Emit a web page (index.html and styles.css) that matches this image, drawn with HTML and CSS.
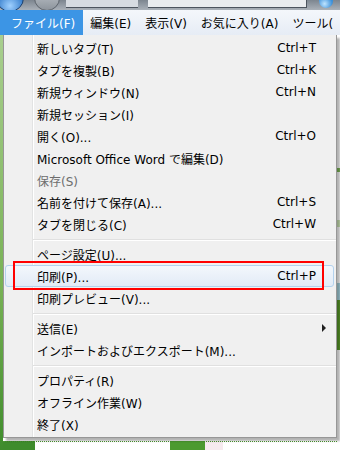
FILE: index.html
```html
<!DOCTYPE html>
<html lang="ja">
<head>
    <meta charset="UTF-8">
    <meta name="viewport" content="width=device-width, initial-scale=1.0">
    <title>ファイル メニュー</title>
    <link rel="stylesheet" href="styles.css">
</head>
<body>

    <div class="chrome">
        <span class="btn-back"></span>
        <span class="btn-fwd"></span>
        <span class="bar"></span>
        <span class="addr"></span>
        <span class="ie-icon"></span>
    </div>

    <div class="menubar">
        <span class="top-item active">ファイル(F)</span>
        <span class="top-item">編集(E)</span>
        <span class="top-item">表示(V)</span>
        <span class="top-item">お気に入り(A)</span>
        <span class="top-item">ツール(</span>
    </div>

    <div class="page">
        <div class="side-left"></div>
        <div class="menu-wrap">
            <div class="menu">
                <div class="item"><span>新しいタブ(T)</span><span class="key">Ctrl+T</span></div>
                <div class="item"><span>タブを複製(B)</span><span class="key">Ctrl+K</span></div>
                <div class="item"><span>新規ウィンドウ(N)</span><span class="key">Ctrl+N</span></div>
                <div class="item"><span>新規セッション(I)</span></div>
                <div class="item"><span>開く(O)...</span><span class="key">Ctrl+O</span></div>
                <div class="item"><span>Microsoft Office Word で編集(D)</span></div>
                <div class="item disabled"><span>保存(S)</span></div>
                <div class="item"><span>名前を付けて保存(A)...</span><span class="key">Ctrl+S</span></div>
                <div class="item"><span>タブを閉じる(C)</span><span class="key">Ctrl+W</span></div>
                <div class="sep"></div>
                <div class="item"><span>ページ設定(U)...</span></div>
                <div class="item hot"><span>印刷(P)...</span><span class="key">Ctrl+P</span></div>
                <div class="item"><span>印刷プレビュー(V)...</span></div>
                <div class="sep"></div>
                <div class="item"><span>送信(E)</span><span class="arrow"></span></div>
                <div class="item"><span>インポートおよびエクスポート(M)...</span></div>
                <div class="sep"></div>
                <div class="item"><span>プロパティ(R)</span></div>
                <div class="item"><span>オフライン作業(W)</span></div>
                <div class="item"><span>終了(X)</span></div>

                <div class="mark"></div>
            </div>
            <div class="below"></div>
        </div>
        <div class="side-right"></div>
    </div>

</body>
</html>
```

FILE: styles.css
```css
body {
    margin: 0;
    width: 340px;
    height: 450px;
    overflow: hidden;
    background-color: #ffffff;
    font-family: "DejaVu Sans", "Noto Sans CJK JP", sans-serif;
    font-size: 12px;
    color: #000;
}

/* browser chrome strip */
.chrome {
    display: flex;
    align-items: flex-start;
    height: 10px;
    overflow: hidden;
    background: linear-gradient(#7c858f, #aab1b9);
}

.btn-back {
    width: 26px;
    height: 26px;
    margin: -16px 0 0 -4px;
    border-radius: 50%;
    background: radial-gradient(circle at 50% 80%, #9fd0ff, #2f78c8 60%, #1d4f92);
    border: 1px solid #1c3f6c;
}

.btn-fwd {
    width: 24px;
    height: 24px;
    margin: -15px 0 0 10px;
    border-radius: 50%;
    background: linear-gradient(#c9ced4, #8d949c);
    border: 1px solid #5d646c;
}

.bar {
    width: 72px;
    height: 7px;
    margin-left: 6px;
    background: #d6dbe1;
    border-bottom: 1px solid #4c545e;
}

.addr {
    width: 158px;
    height: 7px;
    margin-left: 10px;
    background: #e9ecef;
    border-bottom: 1px solid #4c545e;
    border-right: 1px solid #4c545e;
}

.ie-icon {
    width: 14px;
    height: 14px;
    margin: -6px 0 0 12px;
    border-radius: 50%;
    background: radial-gradient(circle at 40% 70%, #bfe4ff, #3a8fd9 60%);
}

/* menu bar */
.menubar {
    display: flex;
    height: 25px;
    align-items: stretch;
    overflow: hidden;
    background: linear-gradient(#f4f7fb, #e6ecf5);
}

.top-item {
    display: flex;
    align-items: center;
    padding: 0 7px;
    white-space: nowrap;
}

.top-item.active {
    padding: 0 8px 0 11px;
    background-color: #3c95e5;
    color: #fff;
}

/* page area */
.page {
    display: flex;
    height: 415px;
}

.side-left {
    width: 3px;
    background: linear-gradient(#a9cf8f, #79b256 60%, #3f8c2c);
}

.menu-wrap {
    width: 334px;
    display: flex;
    flex-direction: column;
}

.menu {
    position: relative;
    box-sizing: border-box;
    height: 403px;
    padding: 2px 0;
    border: 1px solid #979797;
    border-top: none;
    background:
        linear-gradient(to right, transparent 28px, #e2e3e3 28px, #e2e3e3 29px, #ffffff 29px, #ffffff 30px, transparent 30px),
        #f0f0f0;
    box-shadow: 3px 3px 2px rgba(0, 0, 0, 0.3);
}

.item {
    display: flex;
    align-items: center;
    box-sizing: border-box;
    height: 22px;
    padding: 0 20px 0 33px;
    white-space: nowrap;
}

.key {
    margin-left: auto;
}

.disabled {
    color: #6d6d6d;
}

.hot {
    margin: 0 2px 0 1px;
    padding: 0 17px 0 31px;
    border: 1px solid #b3d2ee;
    border-radius: 3px;
    background: linear-gradient(#f3f7fc, #e2ebf6);
}

.sep {
    margin: 4px 0 2px 29px;
    border-top: 1px solid #e0e0e0;
    border-bottom: 1px solid #ffffff;
}

.arrow {
    margin-left: auto;
    margin-right: -10px;
    width: 0;
    height: 0;
    border-top: 4px solid transparent;
    border-bottom: 4px solid transparent;
    border-left: 4px solid #202020;
}

.mark {
    position: absolute;
    left: 9px;
    top: 226px;
    width: 311px;
    height: 29px;
    box-sizing: border-box;
    border: 2px solid #ff0000;
}

.below {
    flex: 1;
    border-top: 1px dotted #4c9a30;
    margin-top: 3px;
    background: linear-gradient(to right, #3f8c2c 0 32px, #ffffff 32px 167px, #4c9a30 167px 202px, #f6eaef 202px 220px, #ffffff 220px);
}

.side-right {
    flex: 1;
    background: linear-gradient(#ffffff 0 133px, #7fb85a 133px 137px, #ffffff 137px 185px, #cfe6b8 185px 192px, #ffffff 192px 248px, #a8d4e0 248px 265px, #5a9a2a 265px 315px, #ffffff 315px);
}
```
